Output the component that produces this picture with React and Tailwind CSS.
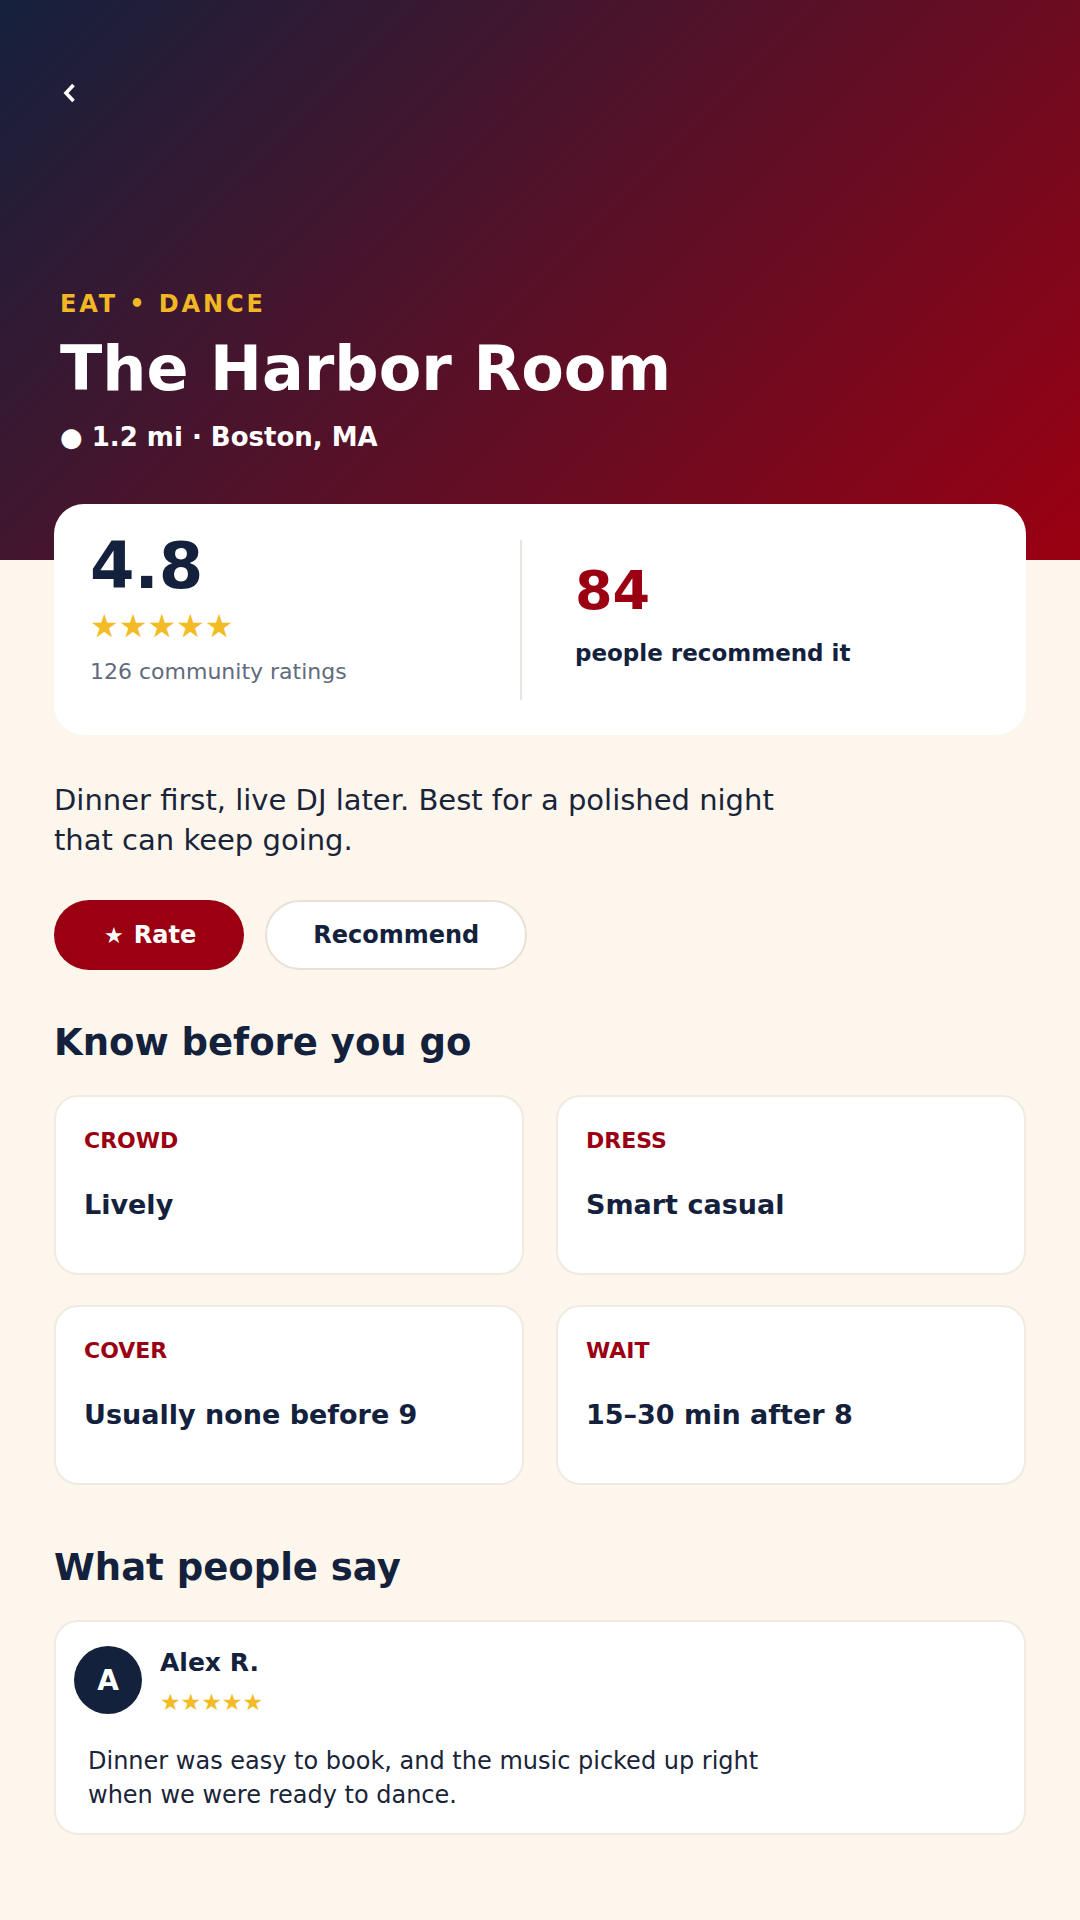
import React from 'react';

const navy = 'text-[#14213d]';

function Stars({ className }) {
    return <span className={className}>★★★★★</span>;
}

function InfoCard({ label, value }) {
    return (
        <div className="h-[180px] rounded-[24px] border-2 border-[#f1eae0] bg-white px-[28px] pt-[33px]">
            <p className="text-[22px] font-bold leading-none text-[#9b0012]">{label}</p>
            <p className={`mt-[39px] text-[27px] font-bold leading-none ${navy}`}>{value}</p>
        </div>
    );
}

export default function App() {
    const facts = [
        { label: 'CROWD', value: 'Lively' },
        { label: 'DRESS', value: 'Smart casual' },
        { label: 'COVER', value: 'Usually none before 9' },
        { label: 'WAIT', value: '15–30 min after 8' },
    ];

    return (
        <div className="min-h-[1920px] w-[1080px] bg-[#fdf6ec] font-['DejaVu_Sans',sans-serif]">
            {/* hero */}
            <div className="flex h-[560px] flex-col bg-[linear-gradient(135deg,#14213d,#9b0012)] px-[60px] pb-[110px] pt-[83px]">
                <button className="ml-[3px] h-[20px] w-[12px]">
                    <svg width="12" height="20" viewBox="0 0 12 20">
                        <path d="M10.5 2 L3 10 L10.5 18" fill="none" stroke="white" strokeWidth="3.6" />
                    </svg>
                </button>
                <div className="mt-auto">
                    <p className="text-[24px] font-bold leading-none tracking-[0.12em] text-[#f2b824]">EAT • DANCE</p>
                    <h1 className="mt-[22px] text-[62px] font-bold leading-none text-white">The Harbor Room</h1>
                    <p className="mt-[24px] text-[26px] font-bold leading-none text-white">● 1.2 mi · Boston, MA</p>
                </div>
            </div>

            <div className="px-[54px]">
                {/* rating card */}
                <div className="relative -mt-[56px] flex h-[231px] items-start rounded-[30px] bg-white px-[36px] pt-[30px]">
                    <div className="w-[430px]">
                        <p className={`text-[64px] font-bold leading-none ${navy}`}>4.8</p>
                        <Stars className="mt-[12px] block text-[32px] leading-none text-[#f3bc26]" />
                        <p className="mt-[19px] text-[22px] leading-none text-[#626a7e]">126 community ratings</p>
                    </div>
                    <div className="mt-[6px] h-[160px] w-[2px] bg-[#e9e4de]" />
                    <div className="pl-[53px] pt-[30px]">
                        <p className="text-[54px] font-bold leading-none text-[#9b0012]">84</p>
                        <p className={`mt-[24px] text-[23px] font-bold leading-none ${navy}`}>people recommend it</p>
                    </div>
                </div>

                <p className="mt-[45px] max-w-[740px] text-[29px] leading-[40px] text-[#1a2438]">
                    Dinner first, live DJ later. Best for a polished night that can keep going.
                </p>

                <div className="mt-[40px] flex gap-[21px]">
                    <button className="flex h-[70px] items-center gap-[10px] rounded-full bg-[#9b0012] pl-[50px] pr-[48px] text-[24px] font-bold text-white">
                        <span className="text-[22px]">★</span> Rate
                    </button>
                    <button className={`h-[70px] rounded-full border-2 border-[#e9e1d6] bg-white px-[46px] text-[24px] font-bold ${navy}`}>
                        Recommend
                    </button>
                </div>

                <h2 className={`mt-[54px] text-[37px] font-bold leading-none ${navy}`}>Know before you go</h2>
                <div className="mt-[34px] grid grid-cols-2 gap-x-[32px] gap-y-[30px]">
                    {facts.map(f => (
                        <InfoCard key={f.label} label={f.label} value={f.value} />
                    ))}
                </div>

                <h2 className={`mt-[64px] text-[37px] font-bold leading-none ${navy}`}>What people say</h2>
                <div className="mt-[34px] rounded-[24px] border-2 border-[#f1eae0] bg-white px-[18px] pb-[21px] pt-[24px]">
                    <div className="flex items-start gap-[18px]">
                        <div className="flex h-[68px] w-[68px] items-center justify-center rounded-full bg-[#14213d] pt-[2px] text-[28px] font-bold text-white">
                            A
                        </div>
                        <div className="pt-[4px]">
                            <p className={`text-[25px] font-bold leading-none ${navy}`}>Alex R.</p>
                            <Stars className="mt-[16px] block text-[23px] leading-none text-[#f3bc26]" />
                        </div>
                    </div>
                    <p className="mt-[30px] max-w-[720px] pl-[14px] text-[24px] leading-[34px] text-[#1a2438]">
                        Dinner was easy to book, and the music picked up right when we were ready to dance.
                    </p>
                </div>
            </div>
        </div>
    );
}
